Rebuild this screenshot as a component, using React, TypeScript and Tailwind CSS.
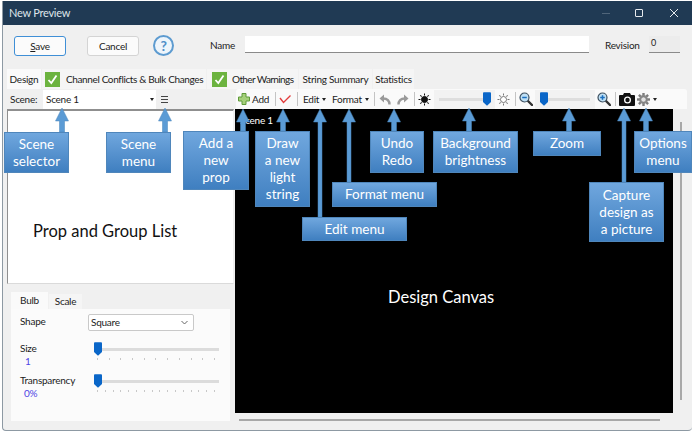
const uiFont = "font-['Lato','Noto_Sans',sans-serif]";
const noteFont = "font-['Lato','Carlito',sans-serif]";

const callouts = [
  { text: "Scene\nselector", cls: "left-[4px] top-[132px] w-[65px] h-[41px]" },
  { text: "Scene\nmenu", cls: "left-[106px] top-[132px] w-[65px] h-[41px]" },
  { text: "Add a\nnew\nprop", cls: "left-[183px] top-[131px] w-[66px] h-[59px]" },
  { text: "Draw\na new\nlight\nstring", cls: "left-[255px] top-[131px] w-[55px] h-[76px]" },
  { text: "Edit menu", cls: "left-[302px] top-[217px] w-[105px] h-[24px]" },
  { text: "Format menu", cls: "left-[332px] top-[182px] w-[105px] h-[25px]" },
  { text: "Undo\nRedo", cls: "left-[370px] top-[131px] w-[54px] h-[42px]" },
  { text: "Background\nbrightness", cls: "left-[433px] top-[131px] w-[85px] h-[42px]" },
  { text: "Zoom", cls: "left-[533px] top-[131px] w-[68px] h-[25px]" },
  { text: "Capture\ndesign as\na picture", cls: "left-[589px] top-[182px] w-[75px] h-[60px]" },
  { text: "Options\nmenu", cls: "left-[634px] top-[131px] w-[58px] h-[42px]" },
];

// x of the arrow, y of the tip, y where it meets its box, stem width
const arrows = [
  [62, 108, 132, 5],
  [165, 108, 132, 5],
  [243, 109, 131, 5],
  [283, 109, 131, 5],
  [320, 109, 217, 4],
  [349, 109, 182, 4],
  [394, 109, 131, 5],
  [469, 108, 131, 5],
  [569, 108, 131, 5],
  [624, 108, 182, 4],
  [646, 108, 131, 5],
];

function Caret() {
  return <span className="ml-[4px] h-0 w-0 shrink-0 border-x-[2.5px] border-t-[3px] border-x-transparent border-t-[#222]" />;
}

function Sep() {
  return <span className="block h-[14px] w-px shrink-0 bg-[#c4c4c4]" />;
}

function Thumb() {
  return (
    <svg width="8" height="14" viewBox="0 0 9 15" className="shrink-0">
      <path d="M0 1a1 1 0 0 1 1-1h7a1 1 0 0 1 1 1v10l-4.500 4L0 11z" fill="#0a66c8" />
    </svg>
  );
}

function Sun({ filled }: { filled?: boolean }) {
  const rays = [0, 45, 90, 135, 180, 225, 270, 315];
  return (
    <svg width="13" height="13" viewBox="0 0 13 13" className="shrink-0">
      {rays.map((r) => (
        <line key={r} x1="6.5" y1="0.5" x2="6.5" y2="2.5" stroke={filled ? "#111" : "#777"} strokeWidth="1" transform={`rotate(${r} 6.5 6.5)`} />
      ))}
      <circle cx="6.5" cy="6.5" r="3" fill={filled ? "#111" : "#fff"} stroke={filled ? "#111" : "#777"} />
    </svg>
  );
}

function Gear() {
  const teeth = [0, 45, 90, 135, 180, 225, 270, 315];
  return (
    <svg width="13" height="13" viewBox="0 0 13 13" className="shrink-0">
      {teeth.map((r) => (
        <rect key={r} x="5.300" y="0" width="2.400" height="3" fill="#7d7d7d" transform={`rotate(${r} 6.5 6.5)`} />
      ))}
      <circle cx="6.500" cy="6.500" r="4.400" fill="#8a8a8a" />
      <circle cx="6.500" cy="6.500" r="2.600" fill="#e2e2e2" stroke="#6f6f6f" strokeWidth="0.600" />
    </svg>
  );
}

function Magnifier({ plus }: { plus?: boolean }) {
  return (
    <svg width="14" height="14" viewBox="0 0 14 14" className="shrink-0">
      <line x1="8.500" y1="8.500" x2="13" y2="13" stroke="#333" strokeWidth="2.400" strokeLinecap="round" />
      <circle cx="5.500" cy="5.500" r="4.500" fill="#bfe0f5" stroke="#3d4f5f" strokeWidth="1.200" />
      <line x1="3.200" y1="5.500" x2="7.800" y2="5.500" stroke="#1a6fc0" strokeWidth="1.500" />
      {plus && <line x1="5.500" y1="3.200" x2="5.500" y2="7.800" stroke="#1a6fc0" strokeWidth="1.500" />}
    </svg>
  );
}

function Check() {
  return (
    <span className="flex h-[15px] w-[15px] shrink-0 items-center justify-center bg-[#6cb33f]">
      <svg width="11" height="11" viewBox="0 0 11 11">
        <path d="M1.500 6l2.800 3L9.500 1.500" fill="none" stroke="#fff" strokeWidth="1.800" />
      </svg>
    </span>
  );
}

function Ticks({ count }: { count: number }) {
  return (
    <div className="ml-[3px] mt-[1px] flex w-[118px] justify-between">
      {Array.from({ length: count }).map((_, i) => (
        <span key={i} className="h-[2px] w-px bg-[#c8c8c8]" />
      ))}
    </div>
  );
}

function PanelSlider({ count }: { count: number }) {
  return (
    <div className="w-[125px]">
      <div className="flex h-[15px] items-start">
        <Thumb />
        <div className="mt-[6px] h-[3px] flex-1 bg-[#dcdcdc]" />
      </div>
      <Ticks count={count} />
    </div>
  );
}

export default function App() {
  return (
    <div className={`relative h-[433px] w-[692px] overflow-hidden bg-white ${uiFont}`}>
      <div className="ml-[2px] mt-[1px] flex h-[430px] w-[690px] flex-col rounded-b-[4px] border-b border-l border-[#8d99a3] bg-[#f0f0f0] text-[10px] tracking-[-0.25px] text-[#1c1c1c]">
        {/* title bar */}
        <div className="flex h-[24px] shrink-0 items-center bg-[#203a54] pl-[6px] text-[#dfe5ea]">
          <span className="text-[11px]">New Preview</span>
          <span className="ml-auto h-px w-[8px] bg-[#50657a]" />
          <span className="ml-[25px] h-[8px] w-[8px] rounded-[1px] border border-[#e6eaee]" />
          <svg width="10" height="10" viewBox="0 0 10 10" className="ml-[26px] mr-[13px]">
            <path d="M1 1l8 8M9 1l-8 8" stroke="#e6eaee" strokeWidth="1" />
          </svg>
        </div>

        {/* save / cancel / name row */}
        <div className="flex h-[44px] shrink-0 items-start pt-[11px]">
          <button className="ml-[11px] h-[20px] w-[52px] rounded-[3px] border border-[#3f8fd6] bg-[#fbfbfb]">
            <u>S</u>ave
          </button>
          <button className="ml-[21px] h-[20px] w-[52px] rounded-[3px] border border-[#d4d4d4] bg-[#fbfbfb]">
            Cancel
          </button>
          <span className="ml-[14px] -mt-[1px] flex h-[21px] w-[21px] shrink-0 items-center justify-center rounded-full border-2 border-[#5d9bd0] bg-[#eef5fb] text-[14px] font-bold leading-none text-[#4f8fc8]">
            ?
          </span>
          <span className="ml-[36px] mt-[2px] w-[35px]">Name</span>
          <div className="h-[17px] w-[344px] border-b border-[#8a8a8a] bg-white" />
          <span className="ml-[16px] mt-[2px] w-[44px]">Revision</span>
          <div className="h-[17px] w-[31px] border-b border-[#8a8a8a] bg-[#ececec] pl-[2px] text-[9px] leading-[13px]">0</div>
        </div>

        {/* tabs */}
        <div className="flex h-[20px] shrink-0 items-stretch pl-[4px]">
          <div className="flex w-[34px] items-center justify-center bg-[#fafafa]">Design</div>
          <div className="ml-px flex w-[164px] items-center bg-[#f5f5f5] pl-[3px]">
            <Check />
            <span className="ml-[6px] whitespace-nowrap tracking-[-0.37px]">Channel Conflicts &amp; Bulk Changes</span>
          </div>
          <div className="ml-px flex w-[91px] items-center bg-[#f5f5f5] pl-[5px]">
            <Check />
            <span className="ml-[5px] whitespace-nowrap tracking-[-0.6px]">Other Warnings</span>
          </div>
          <div className="ml-px flex w-[73px] items-center justify-center whitespace-nowrap bg-[#f5f5f5]">String Summary</div>
          <div className="ml-px flex w-[41px] items-center justify-center bg-[#f5f5f5]">Statistics</div>
        </div>

        {/* toolbar */}
        <div className="flex h-[20px] shrink-0 items-center pl-[7px]">
          <span className="w-[33px]">Scene:</span>
          <div className="flex h-[19px] w-[113px] items-center bg-white pl-[3px] pr-[2px]">
            <span>Scene 1</span>
            <span className="ml-auto h-0 w-0 border-x-[2.5px] border-t-[3px] border-x-transparent border-t-[#222]" />
          </div>
          <div className="ml-[5px] flex w-[7px] flex-col gap-[2px]">
            <span className="h-px bg-[#444]" />
            <span className="h-px bg-[#444]" />
            <span className="h-px bg-[#444]" />
          </div>
          <div className="ml-[68px] flex h-[20px] w-[451px] items-center rounded-t-[3px] bg-[#fafafa] pl-[2px]">
            <svg width="12" height="12" viewBox="0 0 12 12" className="shrink-0">
              <path d="M4 .5h4V4h3.500v4H8v3.500H4V8H.5V4H4z" fill="#a5d07a" stroke="#5f9a3a" />
            </svg>
            <span className="ml-[1px] w-[24px] pl-[1px]">Add</span>
            <Sep />
            <svg width="13" height="11" viewBox="0 0 13 11" className="ml-[3px] shrink-0">
              <path d="M1 4l3.500 4.500L11.500 1.500" fill="none" stroke="#e23c3c" strokeWidth="1.400" />
            </svg>
            <span className="ml-[5px]"><Sep /></span>
            <span className="ml-[5px] w-[15px]">Edit</span>
            <Caret />
            <span className="ml-[6px] w-[29px]">Format</span>
            <Caret />
            <span className="ml-[5px]"><Sep /></span>
            <svg width="12" height="11" viewBox="0 0 12 11" className="ml-[4px] shrink-0">
              <path d="M5 .5L.5 4.500 5 8.500z" fill="#9a9a9a" />
              <path d="M10.500 10.500C10.500 6.500 8.500 4.500 4 4.500" fill="none" stroke="#9a9a9a" strokeWidth="2.400" />
            </svg>
            <svg width="12" height="11" viewBox="0 0 12 11" className="ml-[6px] shrink-0">
              <path d="M7 .5l4.500 4L7 8.500z" fill="#9a9a9a" />
              <path d="M1.500 10.500C1.500 6.500 3.500 4.500 8 4.500" fill="none" stroke="#9a9a9a" strokeWidth="2.400" />
            </svg>
            <span className="ml-[5px]"><Sep /></span>
            <span className="ml-[3px]"><Sun filled /></span>
            <div className="ml-[3px] flex h-[19px] w-[61px] shrink-0 items-center bg-[#f2f2f2] pl-[5px] pr-[4px]">
              <div className="h-[3px] flex-1 bg-[#dedede]" />
              <Thumb />
            </div>
            <span className="ml-[2px]"><Sun /></span>
            <span className="ml-[5px]"><Sep /></span>
            <span className="ml-[3px]"><Magnifier /></span>
            <div className="ml-[2px] flex h-[19px] w-[60px] shrink-0 items-center bg-[#f2f2f2] pl-[5px] pr-[5px]">
              <Thumb />
              <div className="h-[3px] flex-1 bg-[#dedede]" />
            </div>
            <span className="ml-[2px]"><Magnifier plus /></span>
            <span className="ml-[4px]"><Sep /></span>
            <svg width="16" height="13" viewBox="0 0 16 13" className="ml-[3px] shrink-0">
              <path d="M1 2h3l1-2h6l1 2h3a1 1 0 0 1 1 1v9a1 1 0 0 1-1 1H1a1 1 0 0 1-1-1V3a1 1 0 0 1 1-1z" fill="#111" />
              <circle cx="8.500" cy="7" r="3.500" fill="#fff" />
              <circle cx="8.500" cy="7" r="2.200" fill="#111" />
            </svg>
            <span className="ml-[2px]"><Gear /></span>
            <span className="-ml-[1px] flex"><Caret /></span>
          </div>
        </div>

        {/* main area */}
        <div className="flex min-h-0 flex-1">
          <div className="ml-[4px] flex w-[227px] shrink-0 flex-col">
            <div className="h-[175px] border border-t-2 border-[#8f8f8f] border-b-[#dadada] border-r-[#f0f0f0] bg-white" />
            <div className="ml-[4px] mt-[8px] flex h-[17px] items-end">
              <div className="flex h-[17px] w-[37px] items-center justify-center bg-[#fafafa]">Bulb</div>
              <div className="ml-px flex h-[15px] w-[33px] items-center justify-center bg-[#f5f5f5]">Scale</div>
            </div>
            <div className="ml-[4px] flex h-[112px] w-[219px] flex-col bg-[#fbfbfb] pl-[9px]">
              <div className="flex h-[33px] items-start pt-[5px]">
                <span className="w-[68px]">Shape</span>
                <div className="flex h-[17px] w-[106px] items-center justify-between rounded-[2px] border border-[#c9c9c9] bg-white pl-[2px] pr-[5px]">
                  <span>Square</span>
                  <svg width="7" height="5" viewBox="0 0 7 5">
                    <path d="M.5 1l3 3 3-3" fill="none" stroke="#666" />
                  </svg>
                </div>
              </div>
              <div className="flex h-[32px] items-start">
                <div className="w-[74px]">
                  <div className="leading-[13px]">Size</div>
                  <div className="pl-[5px] leading-[13px] text-[#4f46e5]">1</div>
                </div>
                <PanelSlider count={11} />
              </div>
              <div className="flex items-start">
                <div className="w-[74px]">
                  <div className="leading-[13px]">Transparency</div>
                  <div className="pl-[4px] leading-[13px] text-[#4f46e5]">0%</div>
                </div>
                <PanelSlider count={16} />
              </div>
            </div>
          </div>

          <div className="ml-[1px] flex flex-1 flex-col">
            <div className="flex h-[304px]">
              <div className="h-full w-[438px] bg-black pl-[5px] pt-[4px] text-white">Scene 1</div>
              <div className="ml-[7px] mt-[13px] h-[278px] w-[2px] bg-[#a8a8a8]" />
            </div>
            <div className="ml-[4px] mt-[6px] h-[2px] w-[421px] bg-[#a8a8a8]" />
          </div>
        </div>
      </div>

      {/* annotations over the screenshot */}
      <span className={`absolute left-[33px] top-[220px] text-[16.5px] leading-[22px] text-[#111] ${noteFont}`}>Prop and Group List</span>
      <span className={`absolute left-[388px] top-[286px] text-[16.5px] leading-[22px] text-white ${noteFont}`}>Design Canvas</span>

      <svg width="692" height="433" viewBox="0 0 692 433" className="pointer-events-none absolute left-0 top-0">
        {arrows.map(([x, tip, end, stem]) => (
          <path
            key={x}
            d={`M${x} ${tip}l6.500 13h${-(6.5 - stem / 2)}V${end}h${-stem}V${tip + 13}h${-(6.5 - stem / 2)}z`}
            fill="#5b9bd5"
            stroke="#4a86bd"
            strokeWidth="0.500"
          />
        ))}
      </svg>

      {callouts.map((c) => (
        <div
          key={c.text}
          className={`absolute flex items-center justify-center whitespace-pre-line border border-[#4f86bb] bg-gradient-to-b from-[#70a7de] to-[#3f7fc0] text-center text-[13.5px] leading-[17px] text-white ${noteFont} ${c.cls}`}
        >
          {c.text}
        </div>
      ))}
    </div>
  );
}
